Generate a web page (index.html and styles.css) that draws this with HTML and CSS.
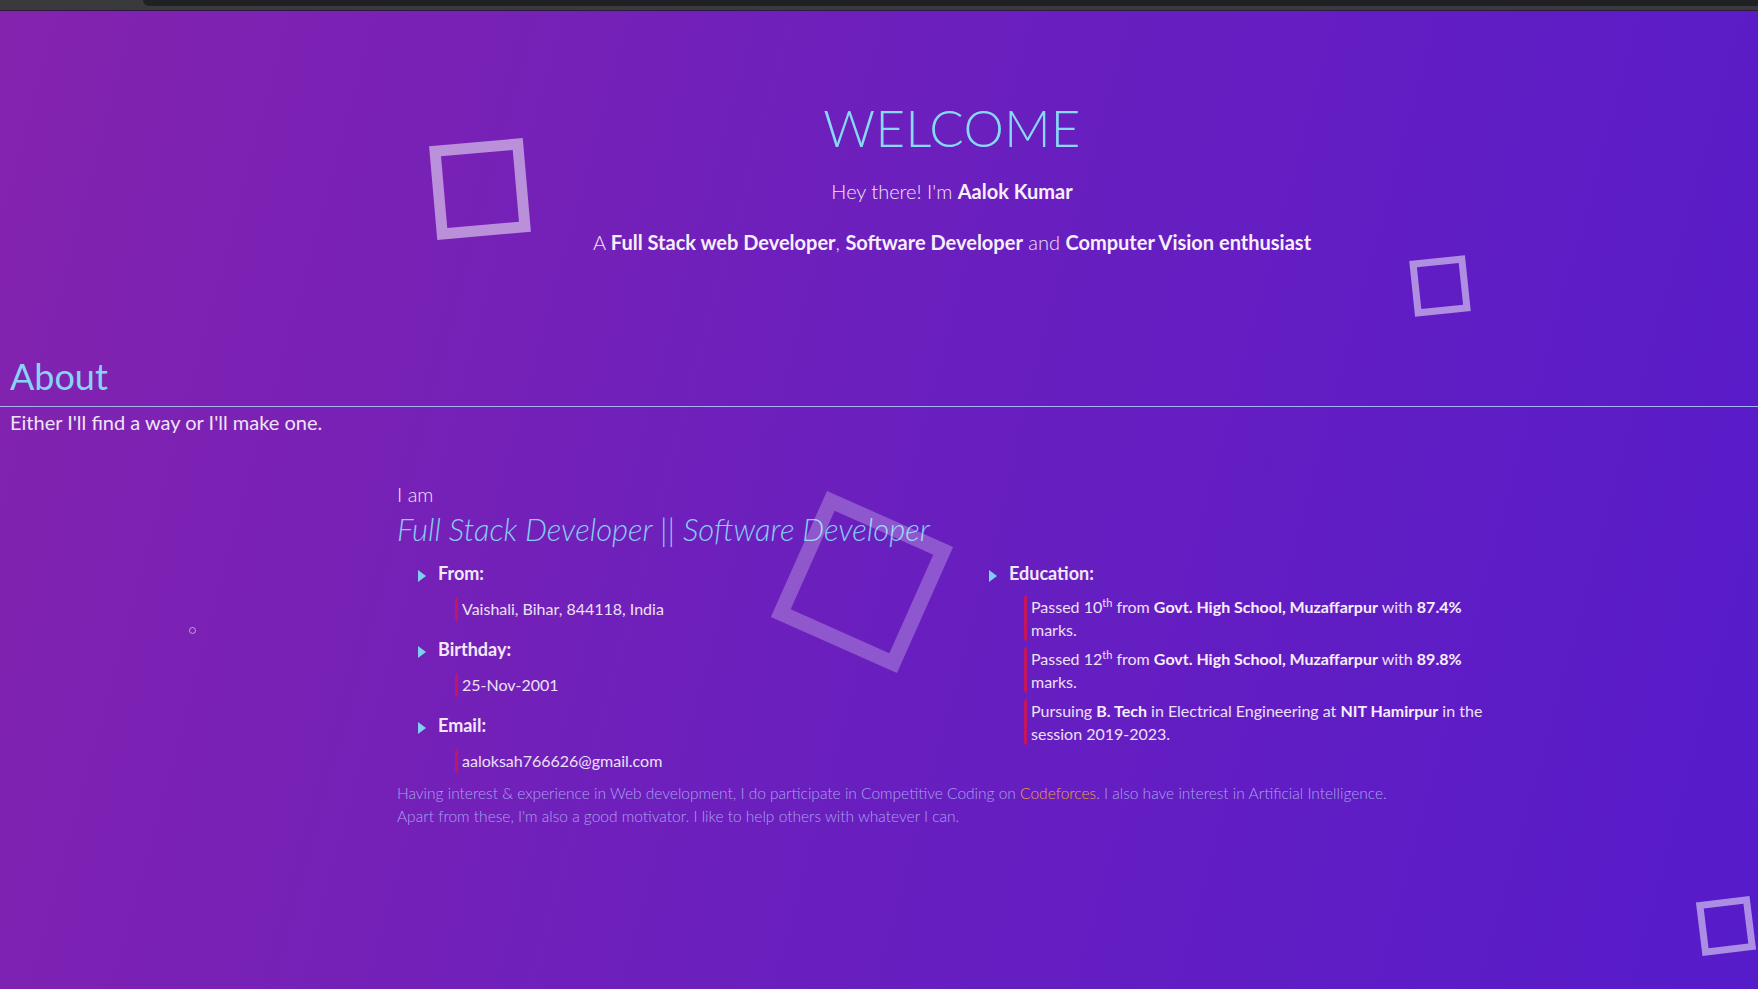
FILE: index.html
```html
<!DOCTYPE html>
<html lang="en">
<head>
<meta charset="utf-8">
<title>Aalok Kumar</title>
<link rel="stylesheet" href="styles.css">
</head>
<body>
<div class="topbar"><div class="tabstrip"></div></div>
<main class="page">
  <div class="shape sq1"></div>
  <div class="shape sq2"></div>
  <div class="shape sq3"></div>
  <div class="shape sq4"></div>
  <div class="shape dot"></div>

  <section class="hero">
    <h1 class="hero-title">WELCOME</h1>
    <p class="hero-line">Hey there! I'm <b>Aalok Kumar</b></p>
    <p class="hero-line hero-line2">A <b>Full Stack web Developer</b>, <b>Software Developer</b> and <b>Computer Vision enthusiast</b></p>
  </section>

  <section class="about">
    <div class="section-title">
      <h2>About</h2>
      <p>Either I'll find a way or I'll make one.</p>
    </div>
    <div class="content">
      <div class="container">
        <p class="iam">I am</p>
        <h3 class="role">Full Stack Developer || Software Developer</h3>
        <div class="cols">
          <ul class="facts">
            <li>
              <div class="label"><span class="caret"></span>From:</div>
              <div class="value">Vaishali, Bihar, 844118, India</div>
            </li>
            <li>
              <div class="label"><span class="caret"></span>Birthday:</div>
              <div class="value">25-Nov-2001</div>
            </li>
            <li>
              <div class="label"><span class="caret"></span>Email:</div>
              <div class="value">aaloksah766626@gmail.com</div>
            </li>
          </ul>
          <ul class="facts facts-right">
            <li>
              <div class="label"><span class="caret"></span>Education:</div>
              <div class="value edu">Passed 10<sup>th</sup> from <b>Govt. High School, Muzaffarpur</b> with <b>87.4%</b> marks.</div>
              <div class="value edu">Passed 12<sup>th</sup> from <b>Govt. High School, Muzaffarpur</b> with <b>89.8%</b> marks.</div>
              <div class="value edu">Pursuing <b>B. Tech</b> in Electrical Engineering at <b>NIT Hamirpur</b> in the session 2019-2023.</div>
            </li>
          </ul>
        </div>
        <p class="bio">Having interest &amp; experience in Web development, I do participate in Competitive Coding on <a href="#">Codeforces</a>. I also have interest in Artificial Intelligence.<br>Apart from these, I'm also a good motivator. I like to help others with whatever I can.</p>
      </div>
    </div>
  </section>
</main>
</body>
</html>
```

FILE: styles.css
```css
* { box-sizing: border-box; }
html, body { margin: 0; padding: 0; }
body {
  font-family: Lato, "Noto Sans", sans-serif;
  color: #efe3f7;
  background: #5a1cc8;
  overflow: hidden;
}

.topbar {
  height: 11px;
  background: #3a3a3c;
  border-bottom: 1px solid #2b1a44;
}
.tabstrip {
  margin-left: 143px;
  height: 6px;
  background: #202124;
  border-bottom-left-radius: 6px;
}

.page {
  position: relative;
  min-height: 978px;
  background: linear-gradient(105deg, #8423ae 0%, #6a1fbe 50%, #561bca 100%);
  overflow: hidden;
}

/* floating decorative shapes */
.shape { position: absolute; }
.sq1 {
  left: 433px; top: 131px;
  width: 94px; height: 94px;
  border: 11px solid rgba(255, 255, 255, 0.5);
  transform: rotate(-5deg);
}
.sq2 {
  left: 1412px; top: 247px;
  width: 56px; height: 56px;
  border: 7px solid rgba(255, 255, 255, 0.5);
  transform: rotate(-6deg);
}
.sq3 {
  left: 793px; top: 502px;
  width: 138px; height: 138px;
  border: 15px solid rgba(255, 255, 255, 0.25);
  transform: rotate(24deg);
}
.sq4 {
  left: 1699px; top: 888px;
  width: 54px; height: 54px;
  border: 7px solid rgba(255, 255, 255, 0.5);
  transform: rotate(-7deg);
}
.dot {
  left: 189px; top: 616px;
  width: 7px; height: 7px;
  border: 1px solid rgba(255, 255, 255, 0.55);
  border-radius: 50%;
}

/* hero */
.hero {
  padding: 86px 0 0 146px;
  text-align: center;
  height: 344px;
}
.hero-title {
  margin: 0;
  font-size: 51px;
  line-height: 1.2;
  font-weight: 300;
  letter-spacing: 0.3px;
  color: #86d9f7;
}
.hero-line {
  margin: 18px 0 0;
  font-size: 20px;
  line-height: 30px;
  font-weight: 300;
}
.hero-line2 { margin-top: 21px; }
.hero-line b { font-weight: 700; color: #f7eefb; }

/* about */
.section-title h2 {
  margin: 0;
  padding: 0 0 8px 10px;
  font-size: 36px;
  line-height: 1.2;
  font-weight: 400;
  color: #88d4f8;
  border-bottom: 1px solid #a6b4f2;
}
.section-title p {
  margin: 0;
  padding-left: 10px;
  font-size: 20px;
  line-height: 30px;
  font-weight: 400;
}

.content { padding-left: 146px; }
.container {
  max-width: 1110px;
  margin: 0 auto;
  padding-top: 42px;
}
.iam {
  margin: 0;
  font-size: 20px;
  line-height: 30px;
  font-weight: 300;
}
.role {
  margin: 2px 0 0;
  font-size: 31px;
  line-height: 1.2;
  font-weight: 300;
  font-style: italic;
  color: #85cdf5;
}

.cols {
  display: grid;
  grid-template-columns: 1fr 1fr;
  column-gap: 30px;
  margin-top: 12px;
}
.facts {
  list-style: none;
  margin: 0;
  padding: 0 0 0 21px;
}
.facts-right { padding-left: 22px; }
.facts li { margin-bottom: 15px; }
.label {
  display: flex;
  align-items: center;
  gap: 12px;
  font-size: 18px;
  line-height: 27px;
  font-weight: 700;
  color: #f3e8f8;
}
.caret {
  width: 0; height: 0;
  margin-top: 4px;
  border-top: 6px solid transparent;
  border-bottom: 6px solid transparent;
  border-left: 8px solid #7ecff3;
}
.value {
  margin: 10px 0 0 37px;
  padding-left: 4px;
  border-left: 3px solid #c3165c;
  border-radius: 3px;
  font-size: 16px;
  line-height: 24px;
  font-weight: 400;
  color: #ece0f5;
}
.facts-right .value { margin-left: 35px; }
.value.edu {
  margin-top: 8px;
  line-height: 23px;
  max-width: 475px;
}
.value.edu + .value.edu { margin-top: 6px; }
.value b { font-weight: 700; color: #f7eefb; }
.value sup { font-size: 11px; line-height: 0; vertical-align: 6px; }

.bio {
  margin: -6px 0 0;
  font-size: 15.5px;
  line-height: 23px;
  font-weight: 300;
  color: #a9a0ef;
}
.bio a { color: #e8a23c; text-decoration: none; }
```
